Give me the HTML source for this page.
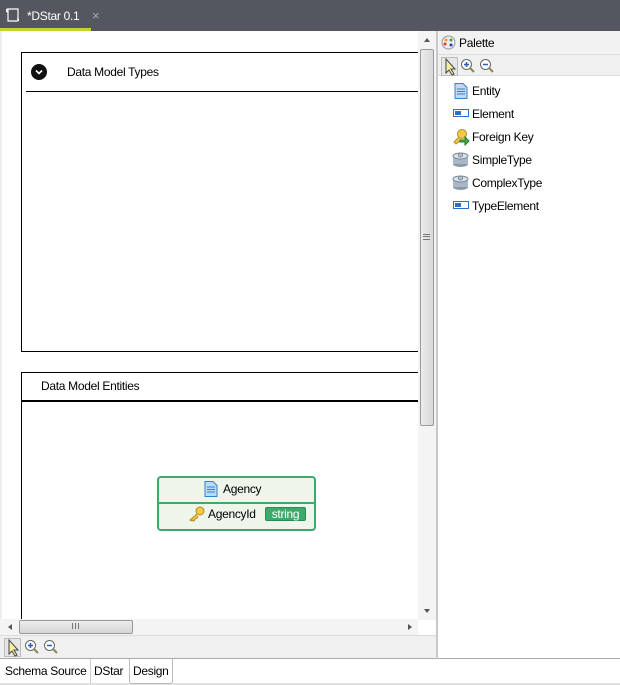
<!DOCTYPE html><html><head><style>
*{margin:0;padding:0;box-sizing:border-box}
body{width:620px;height:685px;position:relative;overflow:hidden;background:#fff;font-family:"Liberation Sans",sans-serif;font-size:12px;color:#000}
.a{position:absolute}
.t{font-size:12px;white-space:nowrap;letter-spacing:-0.3px}
</style></head><body>
<div class="a" style="left:0;top:0;width:620px;height:31px;background:#54575f"></div>
<div class="a" style="left:0;top:28px;width:91px;height:3px;background:#c4d52a"></div>
<svg class="a" style="left:5px;top:7px" width="16" height="16"><path d="M3 2h10v10M3 2v12h9M3 2c-2 0-2 3 0 3M12 14c2 0 2-2 0-2" fill="none" stroke="#fff" stroke-width="1.2"/></svg>
<div class="a t" style="left:27px;top:9px;color:#fff">*DStar 0.1</div>
<div class="a" style="left:92px;top:8px;color:#aaa;font-size:13px">×</div>
<div class="a" style="left:0;top:31px;width:2px;height:628px;background:#eee"></div>
<div class="a" style="left:21px;top:52px;width:398px;height:300px;border:1px solid #000;border-right:none"></div>
<div class="a" style="left:26px;top:91px;width:393px;height:1px;background:#000"></div>
<div class="a" style="left:31px;top:64px;width:16px;height:16px;border-radius:50%;background:#111"></div>
<svg class="a" style="left:31px;top:64px" width="16" height="16"><path d="M5 6.5l3 3 3-3" fill="none" stroke="#fff" stroke-width="1.6"/></svg>
<div class="a t" style="left:67px;top:65px">Data Model Types</div>
<div class="a" style="left:21px;top:372px;width:398px;height:260px;border:1px solid #000;border-right:none;border-bottom:none"></div>
<div class="a" style="left:21px;top:400px;width:398px;height:2px;background:#000"></div>
<div class="a t" style="left:41px;top:379px">Data Model Entities</div>
<div class="a" style="left:157px;top:476px;width:159px;height:55px;border:2px solid #3daa6b;border-radius:4px;background:#eef5ea"></div>
<div class="a" style="left:159px;top:502px;width:155px;height:2px;background:#3daa6b"></div>
<svg class="a" style="left:204px;top:481px" width="14" height="16"><path d="M1 .5h8l4 4v11H1z" fill="#bcd9f5" stroke="#3a7fc8"/><path d="M3 6h8M3 8.5h8M3 11h8" stroke="#3a7fc8"/></svg>
<div class="a t" style="left:223px;top:482px">Agency</div>
<svg class="a" style="left:188px;top:506px" width="18" height="16"><circle cx="12" cy="5" r="4" fill="#f3c94e" stroke="#b88a1a"/><path d="M9 8l-7 6 2 1 1-1 1 1 1-2 2-1 1-2" fill="#f3c94e" stroke="#b88a1a"/></svg>
<div class="a t" style="left:208px;top:507px">AgencyId</div>
<div class="a t" style="left:265px;top:507px;width:41px;height:14px;background:#3daa6b;color:#fff;border:1px solid #2c8b54;border-radius:2px;text-align:center;line-height:12px">string</div>
<div class="a" style="left:418px;top:31px;width:18px;height:589px;background:#f4f4f4"></div>
<div class="a" style="left:420px;top:49px;width:14px;height:377px;background:linear-gradient(90deg,#ececec,#d8d8d8);border:1px solid #9a9a9a;border-radius:2px"></div>
<div class="a" style="left:423px;top:234px;width:7px;height:6px;border-top:1px solid #777;border-bottom:1px solid #777"></div>
<div class="a" style="left:423px;top:236px;width:7px;height:1px;background:#777"></div>
<div class="a" style="left:424px;top:38px;border:3px solid transparent;border-bottom:4px solid #555;border-top:none"></div>
<div class="a" style="left:424px;top:609px;border:3px solid transparent;border-top:4px solid #555;border-bottom:none"></div>
<div class="a" style="left:0;top:619px;width:418px;height:16px;background:#f4f4f4"></div>
<div class="a" style="left:19px;top:620px;width:114px;height:14px;background:linear-gradient(#ececec,#d5d5d5);border:1px solid #9a9a9a;border-radius:2px"></div>
<div class="a" style="left:72px;top:623px;width:7px;height:6px;border-left:1px solid #777;border-right:1px solid #777"></div>
<div class="a" style="left:75px;top:623px;width:1px;height:6px;background:#777"></div>
<div class="a" style="left:8px;top:624px;border:3px solid transparent;border-right:4px solid #555;border-left:none"></div>
<div class="a" style="left:408px;top:624px;border:3px solid transparent;border-left:4px solid #555;border-right:none"></div>
<div class="a" style="left:0;top:635px;width:437px;height:24px;background:#f0f0f0;border-top:1px solid #ddd"></div>
<div class="a" style="left:4px;top:638px;width:17px;height:19px;border:1px solid #bbb;background:#e6e6e6"></div>
<svg class="a" style="left:6px;top:639px" width="14" height="18"><path d="M3 1v14l3-3 3 5 2-1-3-5h4z" fill="#f6f0a0" stroke="#444"/></svg>
<svg class="a" style="left:24px;top:639px" width="16" height="16"><circle cx="6.5" cy="6.5" r="5" fill="#fff" stroke="#666"/><path d="M4 6.5h5M6.5 4v5" stroke="#2a5fc0" stroke-width="1.5"/><path d="M10 10l4 4" stroke="#885" stroke-width="2"/></svg>
<svg class="a" style="left:43px;top:639px" width="16" height="16"><circle cx="6.5" cy="6.5" r="5" fill="#fff" stroke="#666"/><path d="M4 6.5h5" stroke="#2a5fc0" stroke-width="1.5"/><path d="M10 10l4 4" stroke="#885" stroke-width="2"/></svg>
<div class="a" style="left:0;top:658px;width:620px;height:1px;background:#aaa"></div>
<div class="a" style="left:0;top:659px;width:620px;height:26px;background:#fff"></div>
<div class="a" style="left:0;top:683px;width:620px;height:2px;background:#e0e0e0"></div>
<div class="a t" style="left:5px;top:664px">Schema Source</div>
<div class="a" style="left:90px;top:659px;width:1px;height:24px;background:#ccc"></div>
<div class="a t" style="left:94px;top:664px">DStar</div>
<div class="a" style="left:129px;top:659px;width:44px;height:25px;border:1px solid #bbb;border-top:none;border-radius:0 0 3px 3px"></div>
<div class="a t" style="left:133px;top:664px">Design</div>
<div class="a" style="left:436px;top:31px;width:2px;height:628px;background:#c8c8c8"></div>
<div class="a" style="left:438px;top:31px;width:182px;height:23px;background:#f2f2f2"></div>
<div class="a" style="left:438px;top:54px;width:182px;height:22px;background:#f0f0f0;border-top:1px solid #ddd;border-bottom:1px solid #ddd"></div>
<svg class="a" style="left:441px;top:35px" width="15" height="15"><circle cx="7.5" cy="7.5" r="6.5" fill="#eee" stroke="#999"/><circle cx="5" cy="5" r="1.5" fill="#e8a020"/><circle cx="10" cy="5" r="1.5" fill="#3a3"/><circle cx="4" cy="9" r="1.5" fill="#e33"/><circle cx="10" cy="10" r="1.5" fill="#33c"/></svg>
<div class="a t" style="left:459px;top:36px">Palette</div>
<div class="a" style="left:441px;top:57px;width:17px;height:19px;border:1px solid #bbb;background:#e6e6e6"></div>
<svg class="a" style="left:443px;top:58px" width="14" height="18"><path d="M3 1v14l3-3 3 5 2-1-3-5h4z" fill="#f6f0a0" stroke="#444"/></svg>
<svg class="a" style="left:460px;top:58px" width="16" height="16"><circle cx="6.5" cy="6.5" r="5" fill="#fff" stroke="#666"/><path d="M4 6.5h5M6.5 4v5" stroke="#2a5fc0" stroke-width="1.5"/><path d="M10 10l4 4" stroke="#885" stroke-width="2"/></svg>
<svg class="a" style="left:479px;top:58px" width="16" height="16"><circle cx="6.5" cy="6.5" r="5" fill="#fff" stroke="#666"/><path d="M4 6.5h5" stroke="#2a5fc0" stroke-width="1.5"/><path d="M10 10l4 4" stroke="#885" stroke-width="2"/></svg>
<svg class="a" style="left:454px;top:83px" width="14" height="16"><path d="M1 .5h8l4 4v11H1z" fill="#bcd9f5" stroke="#3a7fc8"/><path d="M3 6h8M3 8.5h8M3 11h8" stroke="#3a7fc8"/></svg>
<div class="a t" style="left:472px;top:84px">Entity</div>
<svg class="a" style="left:453px;top:109px" width="16" height="9"><rect x=".5" y=".5" width="15" height="7" fill="#fff" stroke="#2a6fc8"/><rect x="2" y="2" width="6" height="4" fill="#2a6fc8"/></svg>
<div class="a t" style="left:472px;top:107px">Element</div>
<svg class="a" style="left:452px;top:128px" width="18" height="18"><circle cx="10" cy="6" r="4.5" fill="#f3c94e" stroke="#b88a1a"/><path d="M7 9l-5 5 2 2 5-4" fill="#f3c94e" stroke="#b88a1a"/><path d="M8 12h5v-3l4 4-4 4v-3H8z" fill="#4caa3c" stroke="#2a7a2a"/></svg>
<div class="a t" style="left:472px;top:130px">Foreign Key</div>
<svg class="a" style="left:452px;top:151px" width="17" height="17"><ellipse cx="8.5" cy="13" rx="7.5" ry="3" fill="#8a9aaa"/><rect x="1" y="5" width="15" height="8" fill="#a8b8c8"/><ellipse cx="8.5" cy="5" rx="7.5" ry="3" fill="#d8e0e8" stroke="#7a8a9a"/><circle cx="8.5" cy="4" r="2" fill="#b8c4d0" stroke="#7a8a9a"/></svg>
<div class="a t" style="left:472px;top:153px">SimpleType</div>
<svg class="a" style="left:452px;top:174px" width="17" height="17"><ellipse cx="8.5" cy="13" rx="7.5" ry="3" fill="#8a9aaa"/><rect x="1" y="5" width="15" height="8" fill="#a8b8c8"/><ellipse cx="8.5" cy="5" rx="7.5" ry="3" fill="#d8e0e8" stroke="#7a8a9a"/><circle cx="8.5" cy="4" r="2" fill="#b8c4d0" stroke="#7a8a9a"/></svg>
<div class="a t" style="left:472px;top:176px">ComplexType</div>
<svg class="a" style="left:453px;top:201px" width="16" height="9"><rect x=".5" y=".5" width="15" height="7" fill="#fff" stroke="#2a6fc8"/><rect x="2" y="2" width="6" height="4" fill="#2a6fc8"/></svg>
<div class="a t" style="left:472px;top:199px">TypeElement</div>
</body></html>
